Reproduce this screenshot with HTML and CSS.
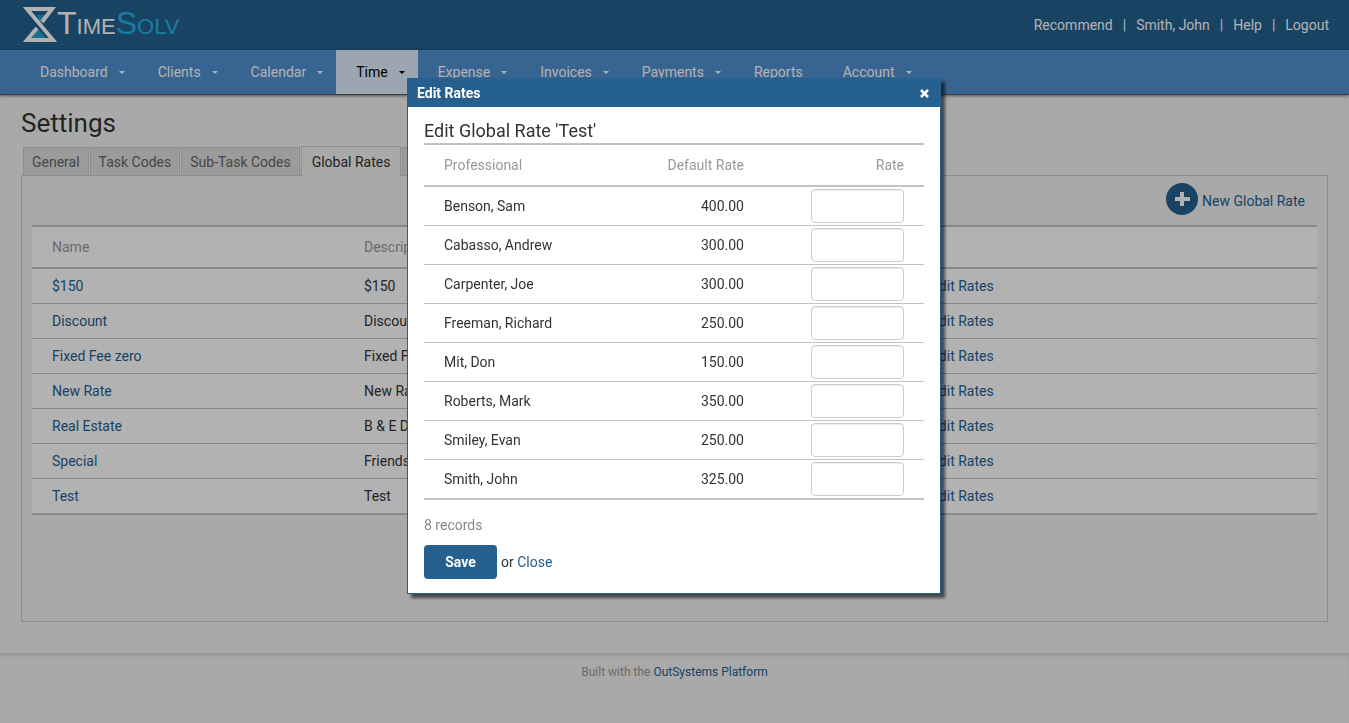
FILE: index.html
```html
<!DOCTYPE html>
<html lang="en">
<head>
    <meta charset="UTF-8">
    <meta name="viewport" content="width=device-width, initial-scale=1.0">
    <title>TimeSolv - Settings</title>
    <link rel="stylesheet" href="styles.css">
</head>
<body>
    <header class="header">
        <a href="#" class="logo">
            <svg width="34" height="36" viewBox="0 0 34 36" aria-hidden="true">
                <path fill="#22a4d0" d="M14 8h9l-6 7zM9 31l6-9 8 9z"/>
                <path fill="none" stroke="#fff" stroke-width="4" stroke-miterlimit="10" d="M19 15L29 2H4l26 31H4l10-12"/>
            </svg>
            <span class="logo-text">T<small>IME</small><span class="logo-accent">S<small>OLV</small></span></span>
        </a>
        <div class="user-links">
            <a href="#">Recommend</a>
            <span>|</span>
            <a href="#">Smith, John</a>
            <span>|</span>
            <a href="#">Help</a>
            <span>|</span>
            <a href="#">Logout</a>
        </div>
    </header>

    <nav class="menu">
        <a href="#" class="menu-item has-sub">Dashboard</a>
        <a href="#" class="menu-item has-sub">Clients</a>
        <a href="#" class="menu-item has-sub">Calendar</a>
        <a href="#" class="menu-item has-sub active">Time</a>
        <a href="#" class="menu-item has-sub">Expense</a>
        <a href="#" class="menu-item has-sub">Invoices</a>
        <a href="#" class="menu-item has-sub">Payments</a>
        <a href="#" class="menu-item">Reports</a>
        <a href="#" class="menu-item has-sub">Account</a>
    </nav>

    <main class="content">
        <h1>Settings</h1>
        <div class="tabs">
            <a href="#" class="tab">General</a>
            <a href="#" class="tab">Task Codes</a>
            <a href="#" class="tab">Sub-Task Codes</a>
            <a href="#" class="tab active">Global Rates</a>
            <a href="#" class="tab">Expense Codes</a>
        </div>
        <div class="panel">
            <div class="actions">
                <a href="#" class="new-link">
                    <svg width="32" height="32" viewBox="0 0 32 32" aria-hidden="true">
                        <circle cx="16" cy="16" r="16" fill="#25608f"/>
                        <path fill="#fff" d="M14 9h4v5h6v4h-6v5h-4v-5H9v-4h5z"/>
                    </svg>
                    <span>New Global Rate</span>
                </a>
            </div>
            <table class="records rates">
                <colgroup>
                    <col class="col-name">
                    <col class="col-desc">
                    <col>
                </colgroup>
                <thead>
                    <tr><th>Name</th><th>Description</th><th></th></tr>
                </thead>
                <tbody>
                    <tr><td><a href="#">$150</a></td><td>$150</td><td><a href="#">Edit Rates</a></td></tr>
                    <tr><td><a href="#">Discount</a></td><td>Discount</td><td><a href="#">Edit Rates</a></td></tr>
                    <tr><td><a href="#">Fixed Fee zero</a></td><td>Fixed Fee zero</td><td><a href="#">Edit Rates</a></td></tr>
                    <tr><td><a href="#">New Rate</a></td><td>New Rate</td><td><a href="#">Edit Rates</a></td></tr>
                    <tr><td><a href="#">Real Estate</a></td><td>B &amp; E Development</td><td><a href="#">Edit Rates</a></td></tr>
                    <tr><td><a href="#">Special</a></td><td>Friends</td><td><a href="#">Edit Rates</a></td></tr>
                    <tr><td><a href="#">Test</a></td><td>Test</td><td><a href="#">Edit Rates</a></td></tr>
                </tbody>
            </table>
        </div>
    </main>

    <footer class="footer">
        Built with the <a href="#">OutSystems Platform</a>
    </footer>

    <div class="overlay">
        <div class="modal" role="dialog" aria-labelledby="modal-title">
            <div class="modal-title">
                <span id="modal-title">Edit Rates</span>
                <button type="button" class="close-btn" aria-label="Close">
                    <svg width="9" height="9" viewBox="0 0 9 9"><path d="M1 1l7 7M8 1L1 8" stroke="#fff" stroke-width="2.5"/></svg>
                </button>
            </div>
            <form class="modal-body">
                <h2>Edit Global Rate 'Test'</h2>
                <table class="records edit-rates">
                    <thead>
                        <tr><th>Professional</th><th class="num">Default Rate</th><th class="num">Rate</th></tr>
                    </thead>
                    <tbody>
                        <tr><td><label for="r1">Benson, Sam</label></td><td class="num">400.00</td><td class="num"><input type="text" id="r1"></td></tr>
                        <tr><td><label for="r2">Cabasso, Andrew</label></td><td class="num">300.00</td><td class="num"><input type="text" id="r2"></td></tr>
                        <tr><td><label for="r3">Carpenter, Joe</label></td><td class="num">300.00</td><td class="num"><input type="text" id="r3"></td></tr>
                        <tr><td><label for="r4">Freeman, Richard</label></td><td class="num">250.00</td><td class="num"><input type="text" id="r4"></td></tr>
                        <tr><td><label for="r5">Mit, Don</label></td><td class="num">150.00</td><td class="num"><input type="text" id="r5"></td></tr>
                        <tr><td><label for="r6">Roberts, Mark</label></td><td class="num">350.00</td><td class="num"><input type="text" id="r6"></td></tr>
                        <tr><td><label for="r7">Smiley, Evan</label></td><td class="num">250.00</td><td class="num"><input type="text" id="r7"></td></tr>
                        <tr><td><label for="r8">Smith, John</label></td><td class="num">325.00</td><td class="num"><input type="text" id="r8"></td></tr>
                    </tbody>
                </table>
                <p class="count">8 records</p>
                <div class="buttons">
                    <button type="submit" class="save-btn">Save</button>
                    <span>or <a href="#">Close</a></span>
                </div>
            </form>
        </div>
    </div>
</body>
</html>
```
FILE: styles.css
```css
* {
    box-sizing: border-box;
}

body {
    margin: 0;
    background-color: #f3f3f3;
    color: #333;
    font-family: Roboto, Arial, sans-serif;
    font-size: 14px;
    line-height: 20px;
}

a {
    color: #25608f;
    text-decoration: none;
}

/* header */
.header {
    display: flex;
    justify-content: space-between;
    align-items: center;
    height: 50px;
    padding: 0 20px 0 23px;
    background-color: #25608f;
}

.logo {
    display: flex;
    align-items: center;
    color: #fff;
}

.logo-text {
    font-family: "Liberation Sans", Arial, sans-serif;
    font-size: 32px;
    line-height: 34px;
}

.logo-text small {
    font-size: 22px;
}

.logo-accent {
    color: #22b4e4;
}

.user-links {
    display: flex;
    gap: 10px;
    color: #fff;
}

.user-links a {
    color: #fff;
}

/* main menu */
.menu {
    display: flex;
    height: 45px;
    padding-left: 20px;
    background-color: #5190d2;
    border-bottom: 1px solid #555;
    box-shadow: 0 1px 3px rgba(0, 0, 0, 0.5);
}

.menu-item {
    display: flex;
    align-items: center;
    padding: 0 20px;
    color: #fff;
}

.menu-item.has-sub {
    padding-right: 13px;
}

.menu-item.has-sub::after {
    content: "";
    margin-left: 11px;
    border: 3px solid transparent;
    border-top-color: currentColor;
    border-bottom: 0;
}

.menu-item.active {
    background-color: #dfeefd;
    color: #000;
}

/* content */
.content {
    padding: 12px 21px 31px;
}

h1 {
    margin: 0;
    font-size: 26px;
    font-weight: 400;
    line-height: 32px;
}

.tabs {
    display: flex;
    align-items: flex-end;
    gap: 1px;
    height: 37px;
    padding-left: 2px;
}

.tab {
    height: 29px;
    padding: 4px 8px;
    border: 1px solid #ccc;
    background-color: #dedede;
    color: #666;
}

.tab.active {
    height: 30px;
    padding: 5px 10px;
    border-bottom: 0;
    background-color: #f3f3f3;
    color: #333;
    z-index: 1;
}

.panel {
    min-height: 447px;
    margin-top: -1px;
    padding: 7px 10px;
    border: 1px solid #ccc;
}

.actions {
    display: flex;
    justify-content: flex-end;
    height: 42px;
    padding-right: 12px;
}

.new-link {
    display: flex;
    gap: 4px;
    height: 32px;
    line-height: 36px;
}

/* tables */
.records {
    width: 100%;
    border-collapse: separate;
    border-spacing: 0;
    background-color: #fff;
    border-top: 2px solid #c3c3c3;
    border-bottom: 1px solid #c3c3c3;
}

.records th {
    height: 42px;
    padding: 0 20px;
    border-bottom: 2px solid #c3c3c3;
    color: #999;
    font-weight: 400;
    text-align: left;
}

.records td {
    height: 35px;
    padding: 0 20px;
    border-bottom: 1px solid #c3c3c3;
}

.records .num {
    text-align: right;
}

.rates {
    table-layout: fixed;
}

.col-name {
    width: 312px;
}

.col-desc {
    width: 567px;
}

.footer {
    padding-top: 9px;
    box-shadow: inset 0 4px 4px -2px rgba(0, 0, 0, 0.15);
    color: #999;
    font-size: 12px;
    text-align: center;
}

/* popup */
.overlay {
    position: fixed;
    top: 0;
    right: 0;
    bottom: 0;
    left: 0;
    z-index: 10;
    display: flex;
    justify-content: center;
    align-items: flex-start;
    padding: 78px 1px 0 0;
    background-color: rgba(0, 0, 0, 0.3);
}

.modal {
    width: 534px;
    border: 1px solid #25608f;
    background-color: #fff;
    box-shadow: 4px 4px 3px rgba(0, 0, 0, 0.6);
}

.modal-title {
    display: flex;
    justify-content: space-between;
    align-items: center;
    height: 28px;
    padding: 0 11px 0 9px;
    background-color: #25608f;
    color: #fff;
    font-weight: 700;
}

.close-btn {
    display: flex;
    padding: 0;
    border: 0;
    background: none;
    cursor: pointer;
}

.modal-body {
    padding: 12px 16px 14px;
}

h2 {
    margin: 0;
    font-size: 18px;
    font-weight: 400;
    line-height: 24px;
}

.edit-rates td {
    height: 39px;
}

.edit-rates .num {
    width: 160px;
}

.edit-rates input {
    display: block;
    width: 93px;
    height: 34px;
    margin-left: auto;
    border: 1px solid #ccc;
    border-radius: 4px;
    box-shadow: inset 0 1px 1px rgba(0, 0, 0, 0.08);
    font: inherit;
    text-align: right;
}

.count {
    margin: 15px 0 10px;
    color: #888;
}

.buttons {
    display: flex;
    align-items: center;
    gap: 4px;
}

.save-btn {
    width: 73px;
    height: 34px;
    border: 0;
    border-radius: 4px;
    background-color: #25608f;
    color: #fff;
    font: inherit;
    font-weight: 700;
    cursor: pointer;
}
```
